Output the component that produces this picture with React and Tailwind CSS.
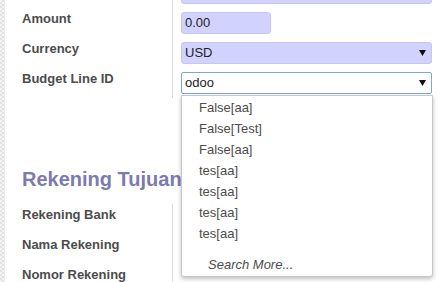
const options = ['False[aa]', 'False[Test]', 'False[aa]', 'tes[aa]', 'tes[aa]', 'tes[aa]', 'tes[aa]']

function Arrow() {
  return (
    <svg width="7" height="6" viewBox="0 0 7 6" className="shrink-0">
      <polygon points="0,0 7,0 3.5,6" fill="#111" />
    </svg>
  )
}

function Label({ children }) {
  return (
    <div className="h-[30px] border-r border-[#dcdcdc] pt-[3px] text-[13px] font-bold leading-[15px] text-[#4c4c4c]">
      {children}
    </div>
  )
}

function Cell({ children }) {
  return <div className="h-[30px] py-[4px] pl-[8px]">{children}</div>
}

export default function App() {
  return (
    <div className="flex h-[282px] w-[440px] overflow-hidden bg-white font-['Liberation_Sans',Arial,sans-serif]">
      <div className="w-[5px] shrink-0 bg-[repeating-conic-gradient(#e2e2e2_0_25%,#f4f4f4_0_50%)] bg-[length:4px_4px]" />
      <div className="relative flex-1 pl-[17px] pr-[8px]">
        <div className="mt-[-22px] grid grid-cols-[151px_1fr]">
          <Label />
          <Cell>
            <div className="h-[22px] rounded-[3px] border border-[#c6c6ee] bg-[#d2d2ff]" />
          </Cell>

          <Label>Amount</Label>
          <Cell>
            <div className="flex h-[22px] w-[90px] items-center rounded-[3px] border border-[#c6c6ee] bg-[#d2d2ff] px-[3px] text-[13px] text-[#222]">
              0.00
            </div>
          </Cell>

          <Label>Currency</Label>
          <Cell>
            <div className="flex h-[22px] items-center justify-between rounded-[3px] border border-[#c6c6ee] bg-[#d2d2ff] pl-[3px] pr-[5px] text-[13px] text-[#222]">
              <span>USD</span>
              <Arrow />
            </div>
          </Cell>

          <Label>Budget Line ID</Label>
          <Cell>
            <div className="flex h-[22px] items-center justify-between rounded-[2px] border border-[#7aa7dc] bg-white pl-[3px] pr-[5px] text-[13px] text-[#222]">
              <span>odoo</span>
              <Arrow />
            </div>
          </Cell>
        </div>

        <h2 className="mt-[70px] text-[20px] font-bold leading-[23px] text-[#7c7bad]">Rekening Tujuan</h2>

        <div className="mt-[13px] grid grid-cols-[151px_1fr]">
          <Label>Rekening Bank</Label>
          <Cell />
          <Label>Nama Rekening</Label>
          <Cell />
          <Label>Nomor Rekening</Label>
          <Cell />
        </div>

        <div className="absolute left-[176px] top-[95px] h-[182px] w-[252px] rounded-b-[3px] border border-[#c8c8c8] bg-white pt-[1px] shadow-[0_2px_4px_rgba(0,0,0,0.25)]">
          {options.map((option, index) => (
            <div key={index} className="pl-[17px] text-[13px] leading-[21px] text-[#4c4c4c]">
              {option}
            </div>
          ))}
          <div className="mt-[10px] pl-[26px] text-[13px] italic leading-[21px] text-[#4c4c4c]">Search More...</div>
        </div>
      </div>
    </div>
  )
}
